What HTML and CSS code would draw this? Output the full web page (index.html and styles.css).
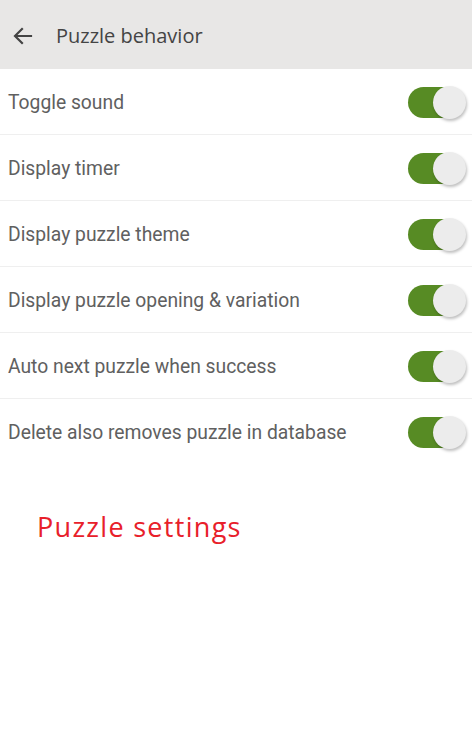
FILE: index.html
```html
<!DOCTYPE html>
<html>
<head>
<meta charset="utf-8">
<link rel="stylesheet" href="styles.css">
</head>
<body>
<header class="bar">
  <svg class="back" width="24" height="24" viewBox="0 0 24 24"><path d="M20 12H5M11 5l-7 7 7 7" fill="none" stroke="#444" stroke-width="2.2" stroke-linecap="square"/></svg>
  <h1 class="title">Puzzle behavior</h1>
</header>
<ul class="list">
  <li class="row"><span class="label">Toggle sound</span><span class="toggle"><span class="knob"></span></span></li>
  <li class="row"><span class="label">Display timer</span><span class="toggle"><span class="knob"></span></span></li>
  <li class="row"><span class="label">Display puzzle theme</span><span class="toggle"><span class="knob"></span></span></li>
  <li class="row"><span class="label">Display puzzle opening &amp; variation</span><span class="toggle"><span class="knob"></span></span></li>
  <li class="row"><span class="label">Auto next puzzle when success</span><span class="toggle"><span class="knob"></span></span></li>
  <li class="row"><span class="label">Delete also removes puzzle in database</span><span class="toggle"><span class="knob"></span></span></li>
</ul>
<p class="note">Puzzle settings</p>
</body>
</html>
```
FILE: styles.css
```css
html, body { margin: 0; padding: 0; background: #fff; }
body { font-family: Roboto, "Liberation Sans", sans-serif; width: 472px; }
.bar { height: 69px; background: #e8e7e6; display: flex; align-items: center; padding-left: 11px; padding-top: 2px; box-sizing: border-box; }
.back { display: block; }
.title { margin: 0 0 0 21px; font-family: "Open Sans", "Noto Sans", sans-serif; font-weight: 400; font-size: 20px; color: #444; }
.list { list-style: none; margin: 0; padding: 0; }
.row { height: 66px; display: flex; align-items: center; justify-content: space-between; padding: 1px 7px 0 8px; box-sizing: border-box; border-bottom: 1px solid #efefef; }
.row:last-child { border-bottom: none; height: 65px; }
.label { font-size: 19.3px; font-weight: 400; color: #606060; }
.toggle { width: 57px; height: 31px; border-radius: 16px; background: #578b24; position: relative; }
.knob { position: absolute; right: -1px; top: -1px; width: 33px; height: 33px; border-radius: 50%; background: #ececec; box-shadow: 1px 2px 3px rgba(0,0,0,0.25); }
.note { margin: 44px 0 0 37px; font-family: "Open Sans", "Noto Sans", sans-serif; font-size: 27px; color: #e8202a; letter-spacing: 1.3px; }
```
